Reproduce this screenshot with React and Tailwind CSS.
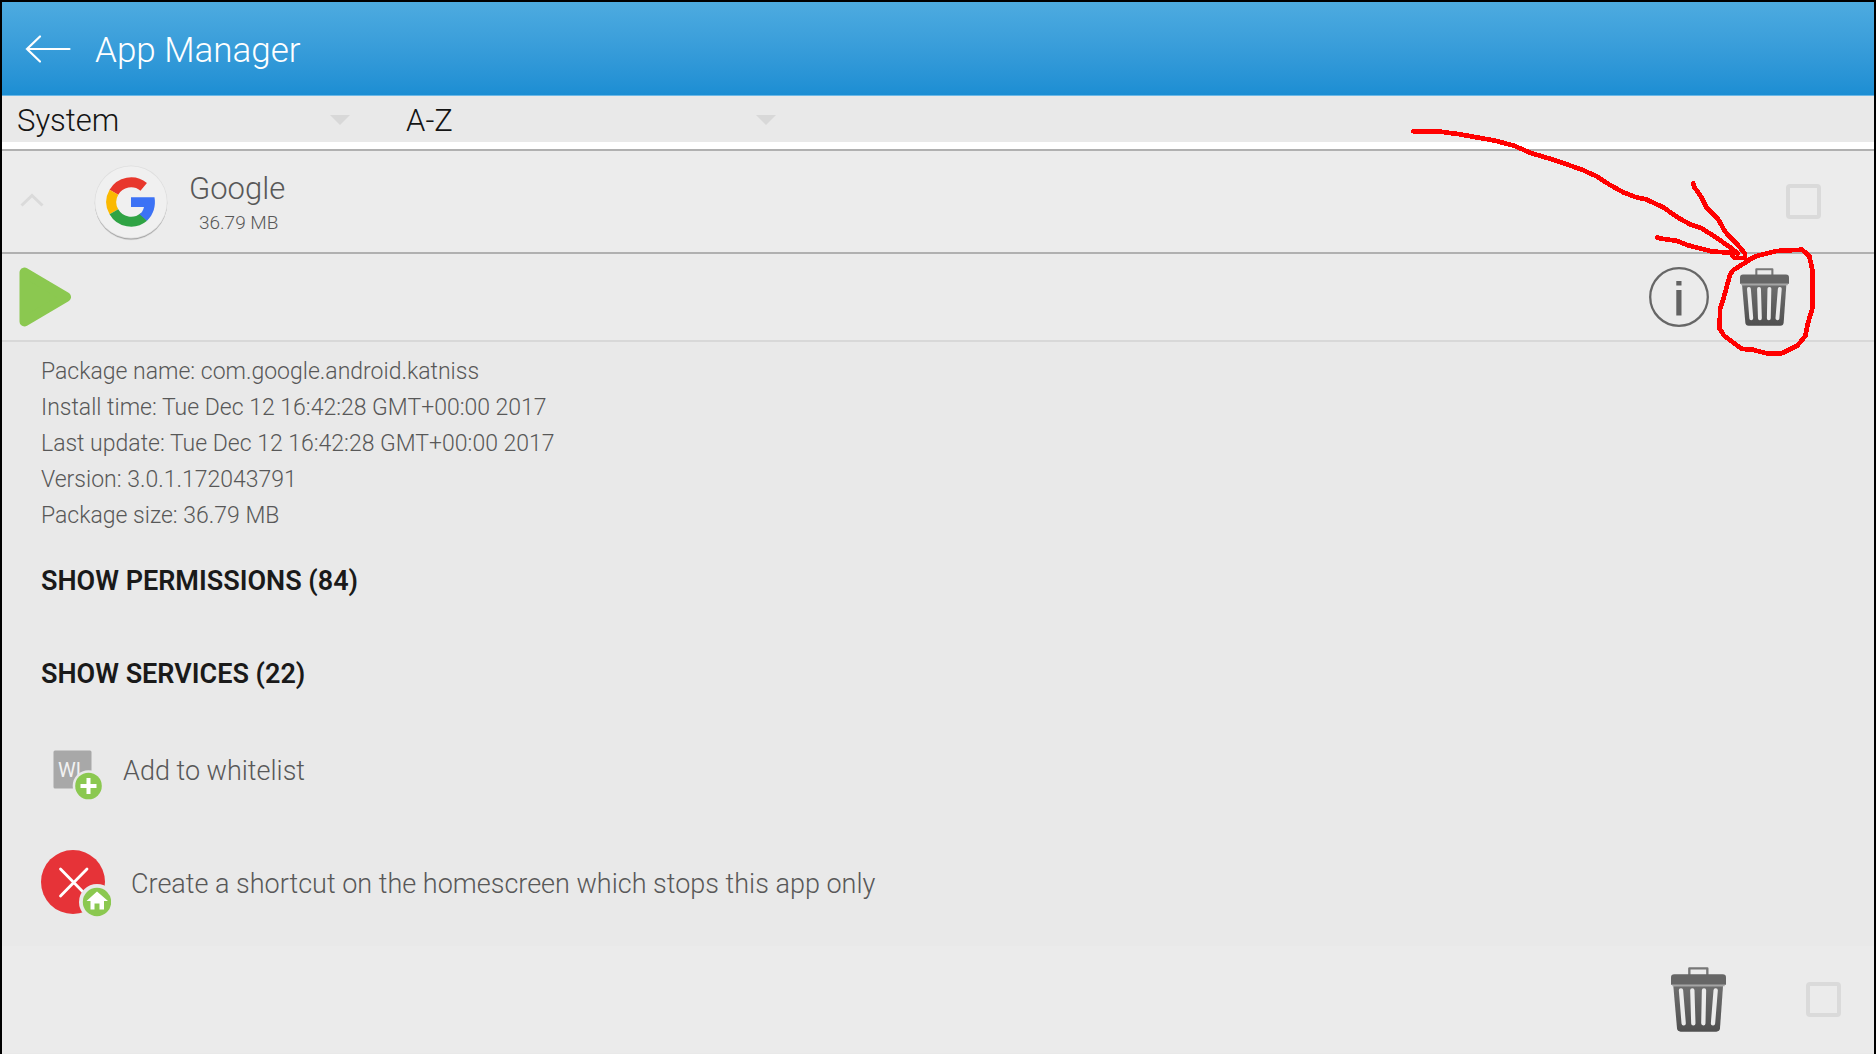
import React from "react";

function BackArrow() {
  return (
    <svg width="46" height="30" viewBox="0 0 46 30" fill="none" stroke="#fff" strokeWidth="2.2" strokeLinecap="round">
      <path d="M44.500 15H2M15 2.500L2 15L15 27.500" />
    </svg>
  );
}

function GoogleIcon() {
  return (
    <svg width="74" height="76" viewBox="0 0 74 76" aria-hidden="true">
      <circle cx="37" cy="39.200" r="36" fill="#000" opacity="0.08" />
      <circle cx="37" cy="38.200" r="36.200" fill="#000" opacity="0.24" />
      <circle cx="37" cy="37" r="36.500" fill="#dedede" />
      <circle cx="37" cy="37" r="35.800" fill="#f0f0f0" />
      <g fill="none" strokeWidth="10">
        <path d="M49.700 21.900A19.700 19.700 0 0 0 19.900 27.200" stroke="#e8372c" />
        <path d="M19.900 27.200A19.700 19.700 0 0 0 19.900 46.800" stroke="#fbb900" />
        <path d="M19.900 46.800A19.700 19.700 0 0 0 49.800 52" stroke="#2fa344" />
      </g>
      <path d="M37 32.300H60.500C62 41 59.500 49.500 53 55.800L45.500 49.300C47.800 47.600 49.300 45.200 50 42H37Z" fill="#3c72f5" />
    </svg>
  );
}

function Trash({ className, id }) {
  return (
    <svg className={className} viewBox="0 0 165 195" aria-hidden="true">
      <defs>
        <linearGradient id={id} x1="0" y1="0" x2="0" y2="1">
          <stop offset="0" stopColor="#6e6e6e" />
          <stop offset="1" stopColor="#505050" />
        </linearGradient>
      </defs>
      <path d="M55 24V4H109V24" fill="none" stroke="#777" strokeWidth="7" strokeLinejoin="round" />
      <path d="M10 22H155Q165 22 165 32V53H0V32Q0 22 10 22Z" fill="#666" />
      <path d="M4 54H161V58H4Z" fill="#a5a5a5" />
      <path d="M7 58H156L147 184Q146 194 136 194H29Q19 194 18 184Z" fill={`url(#${id})`} />
      <g stroke="#ebebeb" strokeWidth="13" strokeLinecap="round">
        <path d="M30 70L38 169" />
        <path d="M64 70L67 169" />
        <path d="M99 70L97 169" />
        <path d="M134 70L126 169" />
      </g>
    </svg>
  );
}

function InfoIcon() {
  return (
    <svg width="60" height="60" viewBox="0 0 60 60" aria-hidden="true">
      <circle cx="30" cy="30" r="28.800" fill="none" stroke="#666" strokeWidth="2.300" />
      <path d="M27.300 14H32.500V18.500H27.300ZM27.300 23H32.500V48.500H27.300Z" fill="#626262" />
    </svg>
  );
}

function WhitelistIcon() {
  return (
    <svg width="50" height="50" viewBox="0 0 50 50" aria-hidden="true">
      <rect x="1.500" y="0.500" width="38" height="38" rx="1.500" fill="#a8a8a8" />
      <text x="6" y="27" fontFamily="Roboto, sans-serif" fontSize="20" fontWeight="400" fill="#f2f2f2">WL</text>
      <circle cx="36.500" cy="36" r="15.800" fill="#e9e9e9" />
      <circle cx="36.500" cy="36" r="13.300" fill="#8bc850" />
      <path d="M36.500 28V44M28.500 36H44.500" stroke="#fff" strokeWidth="4" />
    </svg>
  );
}

function ShortcutIcon() {
  return (
    <svg width="70" height="68" viewBox="0 0 70 68" aria-hidden="true">
      <circle cx="32" cy="32" r="32" fill="#e63338" />
      <path d="M19.500 19L46 46M46 19L19.500 46" stroke="#fff" strokeWidth="2.800" strokeLinecap="round" />
      <circle cx="56" cy="52" r="18" fill="#e9e9e9" />
      <circle cx="56" cy="52" r="14.200" fill="#8bc850" />
      <path d="M56 41.500L67 51H63V59.500H58.500V53.500H53.500V59.500H49.500V51H45.500Z" fill="#fff" />
    </svg>
  );
}

function FilterSelect({ label, options, className }) {
  return (
    <div className={`relative ${className}`}>
      <select
        aria-label={label}
        className="block h-[46px] w-full appearance-none bg-transparent pt-0.5 pl-[15px] text-[31px] font-light text-[#141414] outline-none"
      >
        {options.map((o) => (
          <option key={o}>{o}</option>
        ))}
      </select>
      <svg className="pointer-events-none absolute top-[19px] right-4" width="20" height="10" viewBox="0 0 20 10" aria-hidden="true">
        <path d="M0 0H20L10 10Z" fill="#d8d8d8" />
      </svg>
    </div>
  );
}

function CheckBox({ label }) {
  return (
    <input
      type="checkbox"
      aria-label={label}
      className="block size-[35px] appearance-none rounded-[4px] border-4 border-[#dadada] bg-transparent"
    />
  );
}

function Annotation() {
  return (
    <svg
      className="pointer-events-none absolute top-[118px] right-[54px]"
      width="420"
      height="240"
      viewBox="60 60 1260 720"
      fill="none"
      stroke="#ff0000"
      strokeWidth="14"
      strokeLinecap="round"
      strokeLinejoin="round"
      shapeRendering="crispEdges"
      aria-hidden="true"
    >
      <path d="M100 94H174L240 103L345 122L402 137L455 160L520 179L606 209L652 230L690 255L730 277L766 291L798 298L850 322L894 353L932 374L965 385L1000 407L1045 438L1074 460" />
      <path d="M940 250L942 260L963 290L980 323L1014 357L1036 396L1072 433L1095 461V474H1064L1056 466" />
      <path d="M832 412L838 415L888 422L925 436L994 454L1074 460" />
      <path d="M1118 474L1060 510L1050 524L1035 580L1020 628L1019 686L1033 708L1086 747L1118 749L1160 760H1205L1252 737L1276 708L1283 672L1298 622V515L1288 468L1266 449L1190 453L1130 468L1100 482" />
    </svg>
  );
}

const details = [
  "Package name: com.google.android.katniss",
  "Install time: Tue Dec 12 16:42:28 GMT+00:00 2017",
  "Last update: Tue Dec 12 16:42:28 GMT+00:00 2017",
  "Version: 3.0.1.172043791",
  "Package size: 36.79 MB",
];

export default function App() {
  return (
    <div className="relative flex min-h-screen flex-col border-x-2 border-t-2 border-black bg-[#e9e9e9] font-['Roboto',sans-serif] font-light text-[#585858]">
      <header className="flex h-[94px] items-center gap-6 border-b border-[#6cb8e6] bg-linear-to-b from-[#4dabe0] to-[#1c8ed3] pl-[23px] text-white">
        <button type="button" aria-label="Back">
          <BackArrow />
        </button>
        <h1 className="pt-1 text-[35px] leading-10">App Manager</h1>
      </header>

      <div className="flex gap-[25px] border-b-7 border-white">
        <FilterSelect label="App type" options={["System", "User"]} className="w-[364px]" />
        <FilterSelect label="Sort order" options={["A-Z", "Z-A"]} className="w-[401px]" />
      </div>

      <main className="flex flex-1 flex-col">
        <section className="flex h-[105px] items-center border-y-2 border-[#b0b0b0] bg-[#ececec] pr-[53px] pl-[18px]">
          <button type="button" aria-label="Collapse Google">
            <svg width="24" height="18" viewBox="0 0 24 18" fill="none" stroke="#dadada" strokeWidth="3">
              <path d="M1.500 12.500L12 2.500L22.500 12.500" />
            </svg>
          </button>
          <div className="ml-[50px] pt-0.5">
            <GoogleIcon />
          </div>
          <div className="ml-[21px] flex-1 pt-0.5">
            <h2 className="text-[31px] leading-10">Google</h2>
            <p className="pl-[10px] text-[19px] leading-7">36.79 MB</p>
          </div>
          <CheckBox label="Select Google" />
        </section>

        <section className="flex h-[88px] items-center border-b-2 border-[#d8d8d8] bg-[#ebebeb] pr-[85px] pl-[17px]">
          <button type="button" aria-label="Launch app">
            <svg width="53" height="60" viewBox="0 0 53 60" aria-hidden="true">
              <path d="M5.500 5.500V54.500L47 30Z" fill="#8bc850" stroke="#8bc850" strokeWidth="10" strokeLinejoin="round" />
            </svg>
          </button>
          <button type="button" aria-label="App info" className="ml-auto">
            <InfoIcon />
          </button>
          <button type="button" aria-label="Uninstall Google" className="ml-[31px]">
            <Trash id="binTop" className="h-[58px] w-[49px]" />
          </button>
        </section>

        <section className="flex flex-col items-start pt-3 pl-[39px]">
          {details.map((d) => (
            <p key={d} className="text-[23px] leading-9">
              {d}
            </p>
          ))}
          <button type="button" className="h-[94px] text-[27px] font-semibold text-[#1a1a1a]">
            SHOW PERMISSIONS (84)
          </button>
          <button type="button" className="h-[93px] text-[27px] font-semibold text-[#1a1a1a]">
            SHOW SERVICES (22)
          </button>
          <button type="button" className="flex h-[101px] items-center gap-[21px] pl-[11px] text-[27px]">
            <span className="pt-1.5">
              <WhitelistIcon />
            </span>
            Add to whitelist
          </button>
          <button type="button" className="flex h-[124px] items-center gap-5 text-[27px]">
            <ShortcutIcon />
            Create a shortcut on the homescreen which stops this app only
          </button>
        </section>

        <footer className="flex h-[107px] items-center justify-end gap-20 bg-[#ebebeb] pr-[33px]">
          <button type="button" aria-label="Uninstall selected">
            <Trash id="binBottom" className="h-[65px] w-[55px]" />
          </button>
          <CheckBox label="Select all" />
        </footer>
      </main>

      <Annotation />
    </div>
  );
}
